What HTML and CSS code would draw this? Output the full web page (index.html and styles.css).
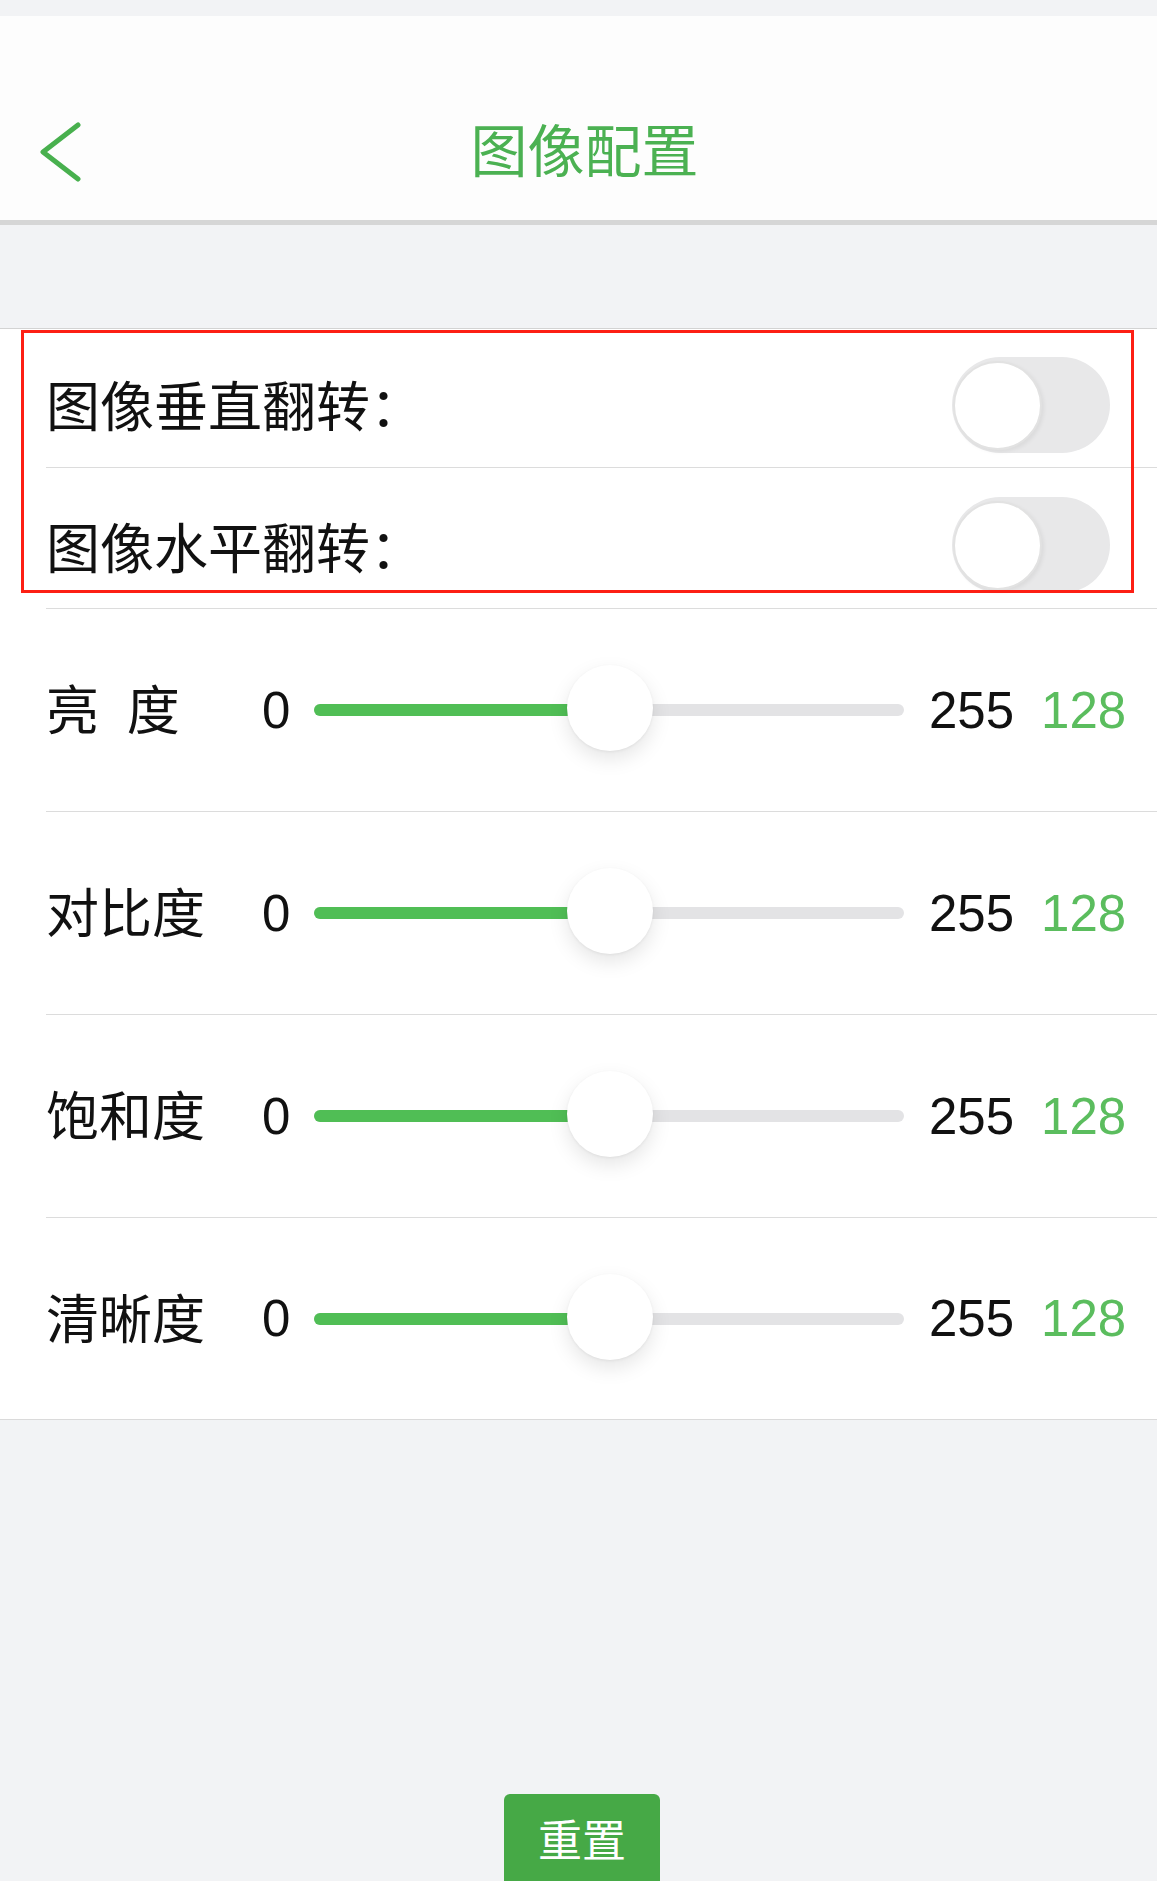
FILE: index.html
```html
<!DOCTYPE html>
<html lang="zh-CN">
  <head>
    <meta charset="UTF-8" />
    <meta name="viewport" content="width=device-width, initial-scale=1.0" />
    <title>图像配置</title>
    <link rel="stylesheet" href="styles.css">
  </head>
  <body>
    <div class="status-strip"></div>

    <!-- Header -->
    <header class="nav-bar">
      <a class="back" href="#">
        <svg width="44" height="60" viewBox="0 0 44 60">
          <polyline points="40,3 5,30 40,57" fill="none" stroke="#48b04e" stroke-width="5" stroke-linecap="round" stroke-linejoin="round" />
        </svg>
      </a>
      <h1 class="nav-title">图像配置</h1>
      <span></span>
    </header>

    <div class="spacer"></div>

    <!-- Settings -->
    <section class="settings">
      <div class="switch-row">
        <span class="label">图像垂直翻转：</span>
        <span class="switch"><span class="knob"></span></span>
      </div>
      <div class="switch-row second">
        <span class="label">图像水平翻转：</span>
        <span class="switch"><span class="knob"></span></span>
      </div>

      <div class="slider-row">
        <span class="label slider-label spaced">亮 度</span>
        <span class="num min">0</span>
        <div class="track">
          <div class="fill" style="width: 50.2%"></div>
          <div class="thumb" style="left: 50.2%"></div>
        </div>
        <span class="num max">255</span>
        <span class="num value">128</span>
      </div>
      <div class="slider-row">
        <span class="label slider-label">对比度</span>
        <span class="num min">0</span>
        <div class="track">
          <div class="fill" style="width: 50.2%"></div>
          <div class="thumb" style="left: 50.2%"></div>
        </div>
        <span class="num max">255</span>
        <span class="num value">128</span>
      </div>
      <div class="slider-row">
        <span class="label slider-label">饱和度</span>
        <span class="num min">0</span>
        <div class="track">
          <div class="fill" style="width: 50.2%"></div>
          <div class="thumb" style="left: 50.2%"></div>
        </div>
        <span class="num max">255</span>
        <span class="num value">128</span>
      </div>
      <div class="slider-row last">
        <span class="label slider-label">清晰度</span>
        <span class="num min">0</span>
        <div class="track">
          <div class="fill" style="width: 50.2%"></div>
          <div class="thumb" style="left: 50.2%"></div>
        </div>
        <span class="num max">255</span>
        <span class="num value">128</span>
      </div>

      <!-- annotation box around the flip switches -->
      <div class="highlight"></div>
    </section>

    <div class="actions">
      <button class="reset">重置</button>
    </div>
  </body>
</html>
```

FILE: styles.css
```css
* {
  box-sizing: border-box;
}

body {
  margin: 0;
  background: #f2f3f5;
  font-family: "Liberation Sans", "Noto Sans CJK SC", sans-serif;
  color: #111;
  overflow: hidden;
}

.status-strip {
  height: 16px;
  background: #f2f3f5;
}

.nav-bar {
  height: 209px;
  padding-top: 68px;
  background: #fdfdfd;
  border-bottom: 5px solid #d6d6d6;
  display: grid;
  grid-template-columns: 1fr auto 1fr;
  align-items: start;
}

.back {
  display: flex;
  align-items: center;
  height: 136px;
  padding-left: 38px;
}

.back svg {
  display: block;
}

.nav-title {
  margin: 0;
  height: 136px;
  line-height: 136px;
  padding-left: 12px;
  font-size: 57px;
  font-weight: 400;
  color: #4bb152;
}

.spacer {
  height: 103px;
}

.settings {
  position: relative;
  background: #fff;
  border-top: 1px solid #d3d3d3;
  border-bottom: 1px solid #dadada;
}

.label {
  font-size: 53px;
  line-height: 1;
  white-space: nowrap;
}

.switch-row {
  margin-left: 46px;
  height: 139px;
  padding: 14px 47px 0 0;
  border-bottom: 1px solid #dcdcdc;
  display: flex;
  align-items: center;
  justify-content: space-between;
}

.switch-row.second {
  height: 141px;
}

.switch-row .label {
  font-size: 54px;
  margin-top: 6px;
}

.switch-row.second .label {
  margin-top: 10px;
}

.switch {
  position: relative;
  width: 158px;
  height: 96px;
  border-radius: 48px;
  background: #e8e8e9;
  display: flex;
  align-items: center;
  padding-left: 1px;
}

.knob {
  width: 89px;
  height: 89px;
  border-radius: 50%;
  background: #fff;
  border: 2px solid #e2e2e2;
  box-shadow: 2px 2px 4px rgba(0, 0, 0, 0.06);
}

.slider-row {
  margin-left: 46px;
  height: 203px;
  border-bottom: 1px solid #dcdcdc;
  display: flex;
  align-items: center;
}

.slider-row.last {
  height: 201px;
  border-bottom: none;
}

.slider-label {
  width: 216px;
  margin-top: 3px;
}

.spaced {
  word-spacing: 13px;
}

.num {
  font-size: 51px;
  line-height: 1;
}

.min {
  width: 28px;
  margin-right: 24px;
}

.track {
  position: relative;
  width: 590px;
  height: 12px;
  border-radius: 6px;
  background: #e3e3e5;
}

.fill {
  height: 100%;
  border-radius: 6px;
  background: #50be55;
}

.thumb {
  position: absolute;
  top: calc(50% - 2px);
  width: 86px;
  height: 86px;
  border-radius: 50%;
  background: #fff;
  transform: translate(-50%, -50%);
  box-shadow: 0 8px 20px rgba(0, 0, 0, 0.1), 0 1px 3px rgba(0, 0, 0, 0.06);
}

.max {
  margin-left: 25px;
}

.value {
  margin-left: 27px;
  color: #5bbd5e;
}

.highlight {
  position: absolute;
  left: 21px;
  top: 1px;
  width: 1113px;
  height: 263px;
  border: 3px solid #fd1f14;
  pointer-events: none;
}

.actions {
  display: flex;
  justify-content: center;
  padding-left: 7px;
  margin-top: 374px;
}

.reset {
  width: 156px;
  height: 96px;
  border: none;
  border-radius: 6px;
  background: #46a946;
  color: #fff;
  font-family: "Noto Sans CJK SC", sans-serif;
  font-size: 44px;
  padding: 0 0 8px;
}
```
